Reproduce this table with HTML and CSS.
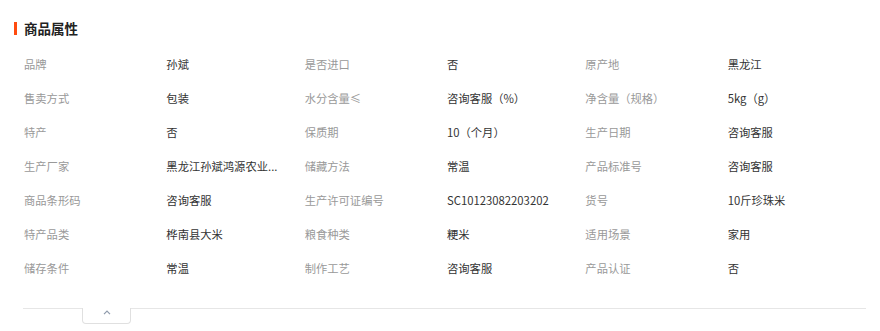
FILE: index.html
```html
<!DOCTYPE html>
<html lang="zh-CN">
<head>
<meta charset="utf-8">
<title>商品属性</title>
<link rel="stylesheet" href="styles.css">
</head>
<body>
<div class="panel">
  <div class="header">
    <span class="bar"></span>
    <h2 class="title">商品属性</h2>
  </div>
  <div class="attrs">
    <div class="grid">
      <span class="label">品牌</span><span class="value">孙斌</span>
      <span class="label">是否进口</span><span class="value">否</span>
      <span class="label">原产地</span><span class="value">黑龙江</span>

      <span class="label">售卖方式</span><span class="value">包装</span>
      <span class="label">水分含量≤</span><span class="value">咨询客服（%）</span>
      <span class="label">净含量（规格）</span><span class="value">5kg（g）</span>

      <span class="label">特产</span><span class="value">否</span>
      <span class="label">保质期</span><span class="value">10（个月）</span>
      <span class="label">生产日期</span><span class="value">咨询客服</span>

      <span class="label">生产厂家</span><span class="value">黑龙江孙斌鸿源农业...</span>
      <span class="label">储藏方法</span><span class="value">常温</span>
      <span class="label">产品标准号</span><span class="value">咨询客服</span>

      <span class="label">商品条形码</span><span class="value">咨询客服</span>
      <span class="label">生产许可证编号</span><span class="value">SC10123082203202</span>
      <span class="label">货号</span><span class="value">10斤珍珠米</span>

      <span class="label">特产品类</span><span class="value">桦南县大米</span>
      <span class="label">粮食种类</span><span class="value">粳米</span>
      <span class="label">适用场景</span><span class="value">家用</span>

      <span class="label">储存条件</span><span class="value">常温</span>
      <span class="label">制作工艺</span><span class="value">咨询客服</span>
      <span class="label">产品认证</span><span class="value">否</span>
    </div>
    <div class="footer">
      <button class="toggle" type="button" aria-label="收起">
        <svg class="caret" width="8" height="5" viewBox="0 0 8 5"><polyline points="1,4.2 4,1.2 7,4.2" fill="none" stroke="#8e9aab" stroke-width="1.2"/></svg>
      </button>
    </div>
  </div>
</div>
</body>
</html>
```

FILE: styles.css
```css
html, body {
  margin: 0;
  padding: 0;
  background: #fff;
}

body {
  font-family: "Noto Sans CJK SC", "Microsoft YaHei", "Noto Sans", sans-serif;
  font-size: 11.3px;
  color: #333;
  width: 880px;
  height: 331px;
  overflow: hidden;
}

.panel {
  padding-top: 15px;
}

.header {
  display: flex;
  align-items: center;
  height: 26px;
  padding-left: 14px;
}

.bar {
  width: 3px;
  height: 13px;
  background: #ff4b0f;
  margin-right: 7px;
}

.title {
  margin: 0;
  font-size: 13.5px;
  font-weight: bold;
  color: #222;
  line-height: 26px;
}

.attrs {
  margin-left: 23px;
  width: 843px;
  margin-top: 6px;
}

.grid {
  display: grid;
  grid-template-columns: repeat(6, 1fr);
  grid-auto-rows: 34px;
  padding-left: 1px;
  align-items: center;
  padding-bottom: 23px;
}

.label {
  color: #999;
  white-space: nowrap;
  line-height: 34px;
}

.value {
  color: #333;
  padding-left: 2px;
  white-space: nowrap;
  line-height: 34px;
}

.footer {
  border-top: 1px solid #e6e6e6;
  padding-left: 59px;
}

.toggle {
  display: flex;
  justify-content: center;
  align-items: flex-start;
  margin-top: -1px;
  width: 49px;
  height: 16px;
  padding: 2px 0 0;
  background: #fff;
  border: 1px solid #e0e0e0;
  border-top: none;
  border-radius: 0 0 4px 4px;
  cursor: pointer;
}

.caret {
  display: block;
}
```
